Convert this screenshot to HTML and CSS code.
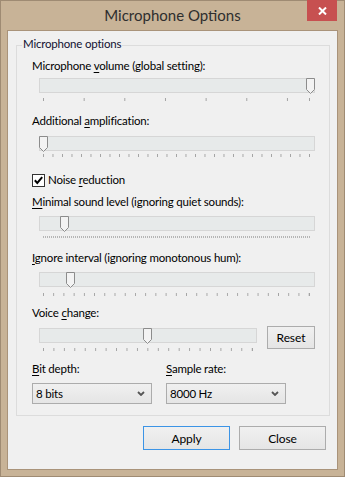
FILE: index.html
```html
<!DOCTYPE html>
<html lang="en">
<head>
    <meta charset="UTF-8">
    <meta name="viewport" content="width=device-width, initial-scale=1.0">
    <title>Microphone Options</title>
    <link rel="stylesheet" href="styles.css">
</head>
<body>
    <div class="window">
        <div class="titlebar">
            <span class="title">Microphone Options</span>
            <button class="close-btn" aria-label="Close">
                <svg width="9" height="8" viewBox="0 0 9 8"><path d="M1 0.5L8 7.5M8 0.5L1 7.5"/></svg>
            </button>
        </div>

        <div class="client">
            <div class="group">
                <span class="group-title">Microphone options</span>

                <!-- Volume -->
                <div class="field-label lbl-volume">Microphone <u>v</u>olume (global setting):</div>
                <div class="slider slider-volume">
                    <span class="thumb" style="left: 267px"><svg width="9" height="16" viewBox="0 0 9 16"><path d="M0.5 0.5H8.5V11.5L4.5 15.5L0.5 11.5Z"/></svg></span>
                </div>
                <div class="ticks ticks-volume"></div>

                <!-- Amplification -->
                <div class="field-label lbl-amp">Additional <u>a</u>mplification:</div>
                <div class="slider slider-amp">
                    <span class="thumb" style="left: 0px"><svg width="9" height="16" viewBox="0 0 9 16"><path d="M0.5 0.5H8.5V11.5L4.5 15.5L0.5 11.5Z"/></svg></span>
                </div>
                <div class="ticks ticks-amp"></div>

                <!-- Noise reduction -->
                <label class="check-row">
                    <svg class="checkbox" width="13" height="13" viewBox="0 0 13 13">
                        <rect x="0.5" y="0.5" width="12" height="12"/>
                        <path d="M2.8 6.3L5.3 8.9L10.2 3.2"/>
                    </svg>
                    <span>Noise <u>r</u>eduction</span>
                </label>

                <div class="field-label lbl-min"><u>M</u>inimal sound level (ignoring quiet sounds):</div>
                <div class="slider slider-min">
                    <span class="thumb" style="left: 21px"><svg width="9" height="16" viewBox="0 0 9 16"><path d="M0.5 0.5H8.5V11.5L4.5 15.5L0.5 11.5Z"/></svg></span>
                </div>
                <div class="ticks ticks-min"></div>

                <div class="field-label lbl-ignore"><u>I</u>gnore interval (ignoring monotonous hum):</div>
                <div class="slider slider-ignore">
                    <span class="thumb" style="left: 27px"><svg width="9" height="16" viewBox="0 0 9 16"><path d="M0.5 0.5H8.5V11.5L4.5 15.5L0.5 11.5Z"/></svg></span>
                </div>
                <div class="ticks ticks-ignore"></div>

                <!-- Voice change -->
                <div class="field-label lbl-voice">Voice <u>c</u>hange:</div>
                <div class="voice-row">
                    <div class="voice-col">
                        <div class="slider slider-voice">
                            <span class="thumb" style="left: 104px"><svg width="9" height="16" viewBox="0 0 9 16"><path d="M0.5 0.5H8.5V11.5L4.5 15.5L0.5 11.5Z"/></svg></span>
                        </div>
                        <div class="ticks ticks-voice"></div>
                    </div>
                    <button class="btn btn-reset">Reset</button>
                </div>

                <!-- Format -->
                <div class="format-row">
                    <div class="format-col">
                        <div class="field-label"><u>B</u>it depth:</div>
                        <div class="combo">
                            <span>8 bits</span>
                            <svg width="8" height="5" viewBox="0 0 8 5"><path d="M1 1L4 4L7 1"/></svg>
                        </div>
                    </div>
                    <div class="format-col">
                        <div class="field-label"><u>S</u>ample rate:</div>
                        <div class="combo">
                            <span>8000 Hz</span>
                            <svg width="8" height="5" viewBox="0 0 8 5"><path d="M1 1L4 4L7 1"/></svg>
                        </div>
                    </div>
                </div>
            </div>

            <div class="dialog-buttons">
                <button class="btn btn-default">Apply</button>
                <button class="btn">Close</button>
            </div>
        </div>
    </div>
</body>
</html>
```
FILE: styles.css
```css
body {
    margin: 0;
    padding: 0;
    font-family: "Lato", "Open Sans", sans-serif;
    font-size: 11.5px;
    letter-spacing: -0.2px;
    color: #000;
    background-color: #c8b397;
}
.window {
    position: relative;
    width: 345px;
    height: 477px;
    box-sizing: border-box;
    border: 1px solid #9f8b73;
    background-color: #c8b397;
}
.titlebar {
    height: 29px;
    text-align: center;
}
.title {
    display: inline-block;
    font-size: 15px;
    letter-spacing: 0;
    line-height: 29px;
    color: #2e2e2e;
}
.close-btn {
    position: absolute;
    top: -1px;
    right: 7px;
    width: 30px;
    height: 21px;
    padding: 0;
    border: none;
    background-color: #c75050;
    display: flex;
    align-items: center;
    justify-content: center;
}
.close-btn svg path {
    stroke: #fff;
    stroke-width: 2;
    fill: none;
}
.client {
    margin: 0 6px;
    height: 440px;
    box-sizing: border-box;
    border: 1px solid #a9937a;
    background-color: #f0f0f0;
    overflow: hidden;
}
.group {
    position: relative;
    margin: 14px 7px 0 8px;
    padding: 12px 14px 11px 15px;
    border: 1px solid #dcdcdc;
}
.group-title {
    position: absolute;
    top: -10px;
    left: 5px;
    padding: 0 1px;
    line-height: 16px;
    background-color: #f0f0f0;
    color: #101030;
}
.field-label {
    line-height: 16px;
    height: 16px;
    white-space: nowrap;
}
u {
    text-underline-offset: 2px;
}

/* Sliders */
.slider {
    position: relative;
    margin-left: 7px;
    width: 276px;
    height: 15px;
    background-color: #e7eaea;
    box-shadow: inset 0 0 0 1px #d6d6d6;
}
.thumb {
    position: absolute;
    top: 0;
    width: 9px;
    height: 16px;
}
.thumb svg {
    display: block;
}
.thumb path {
    fill: #f3f3f3;
    stroke: #8c8c8c;
}
.ticks {
    margin-left: 11px;
    width: 267px;
    height: 3px;
    box-sizing: border-box;
    border-right: 1px solid #a3a3a3;
    background-image: linear-gradient(to right, #a3a3a3 1px, transparent 1px);
    background-repeat: repeat-x;
}

.slider-volume { margin-top: 4px; }
.ticks-volume { margin-top: 5px; background-size: 40.67px 100%; }

.lbl-amp { margin-top: 12px; }
.slider-amp { margin-top: 7px; }
.ticks-amp { margin-top: 3px; background-size: 9.5px 100%; }

.check-row {
    display: flex;
    align-items: center;
    gap: 3px;
    margin-top: 15px;
    line-height: 16px;
}
.checkbox rect {
    fill: #fff;
    stroke: #333;
}
.checkbox path {
    fill: none;
    stroke: #000;
    stroke-width: 2;
}

.lbl-min { margin-top: 6px; }
.slider-min { margin-top: 6px; }
.ticks-min {
    margin-top: 5px;
    height: 2px;
    background-size: 2px 100%;
    background-image: linear-gradient(to right, #b5b5b5 1px, transparent 1px);
    border-right-color: #b5b5b5;
}

.lbl-ignore { margin-top: 12px; }
.slider-ignore { margin-top: 6px; }
.ticks-ignore { margin-top: 6px; background-size: 10.23px 100%; }

.lbl-voice { margin-top: 9px; }
.voice-row {
    display: flex;
    align-items: flex-start;
    margin-top: 5px;
}
.voice-col {
    padding-top: 2px;
}
.slider-voice { width: 218px; }
.ticks-voice {
    margin-top: 5px;
    width: 210px;
    background-size: 10.45px 100%;
}

/* Buttons */
.btn {
    font-family: inherit;
    font-size: 12px;
    letter-spacing: -0.1px;
    color: #000;
    padding: 0;
    border: 1px solid #acacac;
    background: linear-gradient(#f0f0f0, #e5e5e5);
}
.btn-reset {
    margin-left: 10px;
    width: 53px;
    height: 23px;
}

/* Format selectors */
.format-row {
    display: flex;
    gap: 14px;
    margin-top: 10px;
}
.format-col {
    width: 120px;
}
.combo {
    margin-top: 6px;
    height: 21px;
    box-sizing: border-box;
    border: 1px solid #acacac;
    background: linear-gradient(#f0f0f0, #e5e5e5);
    display: flex;
    align-items: center;
    justify-content: space-between;
    padding: 0 6px 0 3px;
}
.combo path {
    fill: none;
    stroke: #555;
    stroke-width: 1.8;
}

.dialog-buttons {
    display: flex;
    justify-content: flex-end;
    gap: 9px;
    margin-top: 10px;
    padding-right: 11px;
}
.dialog-buttons .btn {
    width: 87px;
    height: 24px;
}
.btn-default {
    border-color: #3c94e6;
}
```
